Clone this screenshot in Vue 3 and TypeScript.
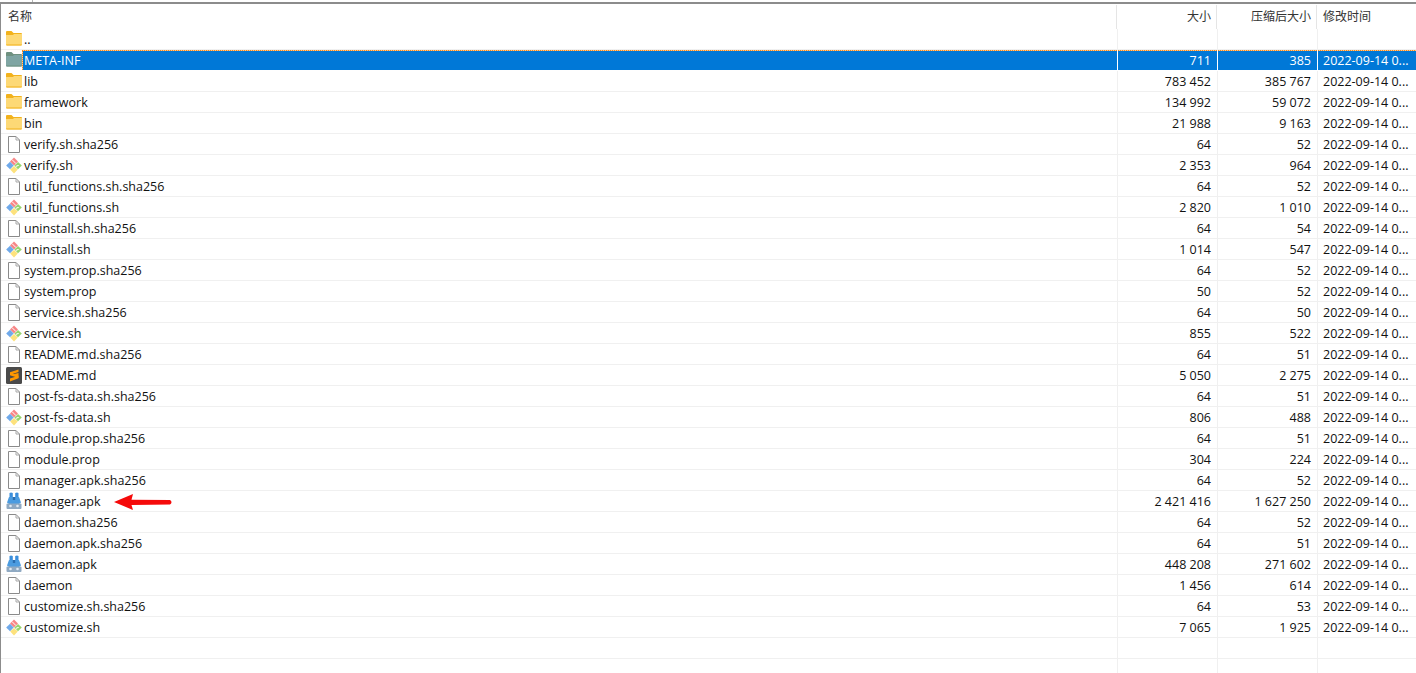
<script setup lang="ts">
type Kind = 'folder' | 'file' | 'git' | 'subl' | 'apk'
interface Row { name: string; size: string; packed: string; kind: Kind; date: boolean }
const raw: [string, string, string, Kind][] = [
  ['..', '', '', 'folder'],
  ['META-INF', '711', '385', 'folder'],
  ['lib', '783 452', '385 767', 'folder'],
  ['framework', '134 992', '59 072', 'folder'],
  ['bin', '21 988', '9 163', 'folder'],
  ['verify.sh.sha256', '64', '52', 'file'],
  ['verify.sh', '2 353', '964', 'git'],
  ['util_functions.sh.sha256', '64', '52', 'file'],
  ['util_functions.sh', '2 820', '1 010', 'git'],
  ['uninstall.sh.sha256', '64', '54', 'file'],
  ['uninstall.sh', '1 014', '547', 'git'],
  ['system.prop.sha256', '64', '52', 'file'],
  ['system.prop', '50', '52', 'file'],
  ['service.sh.sha256', '64', '50', 'file'],
  ['service.sh', '855', '522', 'git'],
  ['README.md.sha256', '64', '51', 'file'],
  ['README.md', '5 050', '2 275', 'subl'],
  ['post-fs-data.sh.sha256', '64', '51', 'file'],
  ['post-fs-data.sh', '806', '488', 'git'],
  ['module.prop.sha256', '64', '51', 'file'],
  ['module.prop', '304', '224', 'file'],
  ['manager.apk.sha256', '64', '52', 'file'],
  ['manager.apk', '2 421 416', '1 627 250', 'apk'],
  ['daemon.sha256', '64', '52', 'file'],
  ['daemon.apk.sha256', '64', '51', 'file'],
  ['daemon.apk', '448 208', '271 602', 'apk'],
  ['daemon', '1 456', '614', 'file'],
  ['customize.sh.sha256', '64', '53', 'file'],
  ['customize.sh', '7 065', '1 925', 'git'],
]
const rows: Row[] = raw.map(([name, size, packed, kind]) => ({ name, size, packed, kind, date: name !== '..' }))
</script>

<template>
  <div class="page">
    <div class="tab-edge"><span class="tab-notch"></span></div>
    <div class="frame">
      <div class="row head">
        <div class="cell name"><span class="head-label">名称</span></div>
        <div class="cell num">大小</div>
        <div class="cell num">压缩后大小</div>
        <div class="cell date">修改时间</div>
      </div>
      <div v-for="r in rows" :key="r.name" class="row" :class="{ selected: r.name === 'META-INF' }">
        <div class="cell name">
          <span class="icon">
            <svg v-if="r.kind === 'folder'" class="folder-svg" width="16" height="15" viewBox="0 0 16 15">
              <path class="fold-back" d="M0 3 V1 Q0 0 1 0 H5.5 L7.5 2 H15 Q16 2 16 3 V5 H0Z" />
              <path class="fold-front" d="M0 4 H7 L8 3 H16 V13.5 Q16 14.5 15 14.5 H1 Q0 14.5 0 13.5Z" />
              <path class="fold-back" d="M0 13.5 H16 Q16 14.5 15 14.5 H1 Q0 14.5 0 13.5Z" />
            </svg>
            <svg v-else-if="r.kind === 'file'" width="16" height="18" viewBox="0 0 16 18">
              <path d="M2.5 1.5 H10 L13.5 5 V17.5 H2.5Z" fill="#fff" stroke="#8a8a8a" />
              <path d="M10 1.5 V5 H13.5" fill="none" stroke="#a8a8a8" />
            </svg>
            <svg v-else-if="r.kind === 'git'" width="16" height="17" viewBox="0 0 16 17">
              <path d="M8 0.5 L12 4.5 L8 8.5 L4 4.5Z" fill="#f78686" />
              <path d="M8.4 8.5 L12 4.9 L15.8 8.5 L12 12.3Z" fill="#97d46e" />
              <path d="M8 8.9 L11.8 12.6 L8 16.5 L4.2 12.6Z" fill="#fde27d" />
              <path d="M0.2 8.5 L4 4.7 L7.7 8.5 L4 12.3Z" fill="#6fa9ea" />
              <path d="M6 2.6 L10 6.6" stroke="#fff" stroke-width="1" fill="none" />
              <path d="M9.5 10.2 L12 8.5 M10.5 8.5 H13" stroke="#fff" stroke-width="0.7" fill="none" />
            </svg>
            <svg v-else-if="r.kind === 'subl'" width="16" height="17" viewBox="0 0 16 17">
              <rect x="0" y="0" width="16" height="17" rx="1.5" fill="#4a4a4a" />
              <path d="M12.5 2.5 L4 5.3 V8.3 L12.5 11 V8.4 L7 6.8 L12.5 5.1Z" fill="#ff9800" />
              <path d="M4 8 L12.5 5.9 V8.7 L4 11.4 V14.4 L12.5 11.2 V9Z" fill="#ff9800" />
            </svg>
            <svg v-else width="16" height="18" viewBox="0 0 16 18">
              <path d="M3.5 1 Q5 0 6.8 1 V6 H3.5Z" fill="#3b8edb" />
              <path d="M9.2 1 Q11 0 12.5 1 V6 H9.2Z" fill="#3b8edb" />
              <path d="M1 10.5 L3 5 H13 L15 10.5 L13 12 H3Z" fill="#4a9be0" />
              <rect x="6.8" y="5" width="2.4" height="3" fill="#2a6db0" />
              <rect x="0.5" y="11.5" width="15" height="5.5" rx="1" fill="#8fa9c2" />
              <circle cx="4.5" cy="14" r="1.3" fill="#dfe9f3" />
              <circle cx="11.5" cy="14" r="1.3" fill="#dfe9f3" />
            </svg>
          </span>
          <span class="label">{{ r.name }}</span>
          <svg v-if="r.name === 'manager.apk'" class="arrow" width="60" height="18" viewBox="0 0 60 18">
            <path d="M1 9 L20 1 L18.5 6.8 L57 7 Q60 9.2 57 11.6 L18.5 12 L20 17Z" fill="#f50a0a" />
          </svg>
        </div>
        <div class="cell num">{{ r.size }}</div>
        <div class="cell num">{{ r.packed }}</div>
        <div class="cell date">{{ r.date ? '2022-09-14 0...' : '' }}</div>
      </div>
      <div class="row"><div class="cell name"></div><div class="cell num"></div><div class="cell num"></div><div class="cell date"></div></div>
      <div class="row"><div class="cell name"></div><div class="cell num"></div><div class="cell num"></div><div class="cell date"></div></div>
    </div>
  </div>
</template>

<style>
html, body { margin: 0; background: #fff; overflow: hidden; }
</style>

<style scoped>
.page {
  width: 1416px;
  height: 673px;
  overflow: hidden;
  background: #fff;
  font-family: "Open Sans", "Noto Sans CJK SC", sans-serif;
  font-size: 12.5px;
  color: #111;
}
.tab-edge { height: 2px; position: relative; }
.tab-notch {
  position: absolute;
  left: 32px;
  top: 0;
  width: 1px;
  height: 2px;
  background: #b4b4b4;
}
.frame {
  border-top: 2px solid #8c8c8c;
  border-left: 1px solid #8c8c8c;
  height: 669px;
}
.row {
  display: grid;
  grid-template-columns: 1117px 100px 100px 1fr;
  height: 20px;
  border-bottom: 1px solid #f0f0f0;
}
.row.head {
  height: 25px;
  border-bottom: none;
  grid-template-columns: 1116px 100px 100px 1fr;
  font-size: 12px;
}
.cell {
  display: flex;
  align-items: center;
  white-space: nowrap;
  border-right: 1px solid #f0f0f0;
  box-sizing: border-box;
  min-width: 0;
}
.cell.num { justify-content: flex-end; padding-right: 6px; }
.cell.date { padding-left: 5px; border-right: none; }
.head .cell {
  color: #333;
  margin: 1px 0 0;
  padding-bottom: 2px;
  border-right-color: #e5e5e5;
}
.head .cell.num { padding-right: 5px; }
.head .cell.date { padding-left: 6px; }
.head-label { padding-left: 3px; }
.name { position: relative; padding-left: 4px; }
.icon {
  width: 19px;
  height: 18px;
  display: flex;
  align-items: center;
  flex: none;
  padding-left: 1px;
  box-sizing: border-box;
}
.folder-svg { margin-top: -2px; }
.fold-back { fill: #f2b21c; }
.fold-front { fill: #fdd976; }
.arrow { position: absolute; left: 112px; top: 2px; }
.selected { border-bottom-color: #fff; }
.selected .cell {
  color: #fff;
  border-right-color: #fff;
  background-color: #0078d7;
  background-image: repeating-linear-gradient(90deg, #f58a1f 0 1px, #fdc98f 1px 2px);
  background-size: 100% 1px;
  background-repeat: no-repeat;
}
.selected .cell.name { background: #fff; }
.selected .label {
  align-self: stretch;
  display: flex;
  align-items: center;
  flex: 1;
  margin-left: -2px;
  padding-left: 2px;
  background-color: #0078d7;
  background-image:
    repeating-linear-gradient(90deg, #f58a1f 0 1px, #fdc98f 1px 2px),
    repeating-linear-gradient(0deg, #f58a1f 0 1px, #fdc98f 1px 2px);
  background-size: 100% 1px, 1px 100%;
  background-repeat: no-repeat;
}
.selected .fold-back { fill: #6f9180; }
.selected .fold-front { fill: #7fa5a3; }
</style>
